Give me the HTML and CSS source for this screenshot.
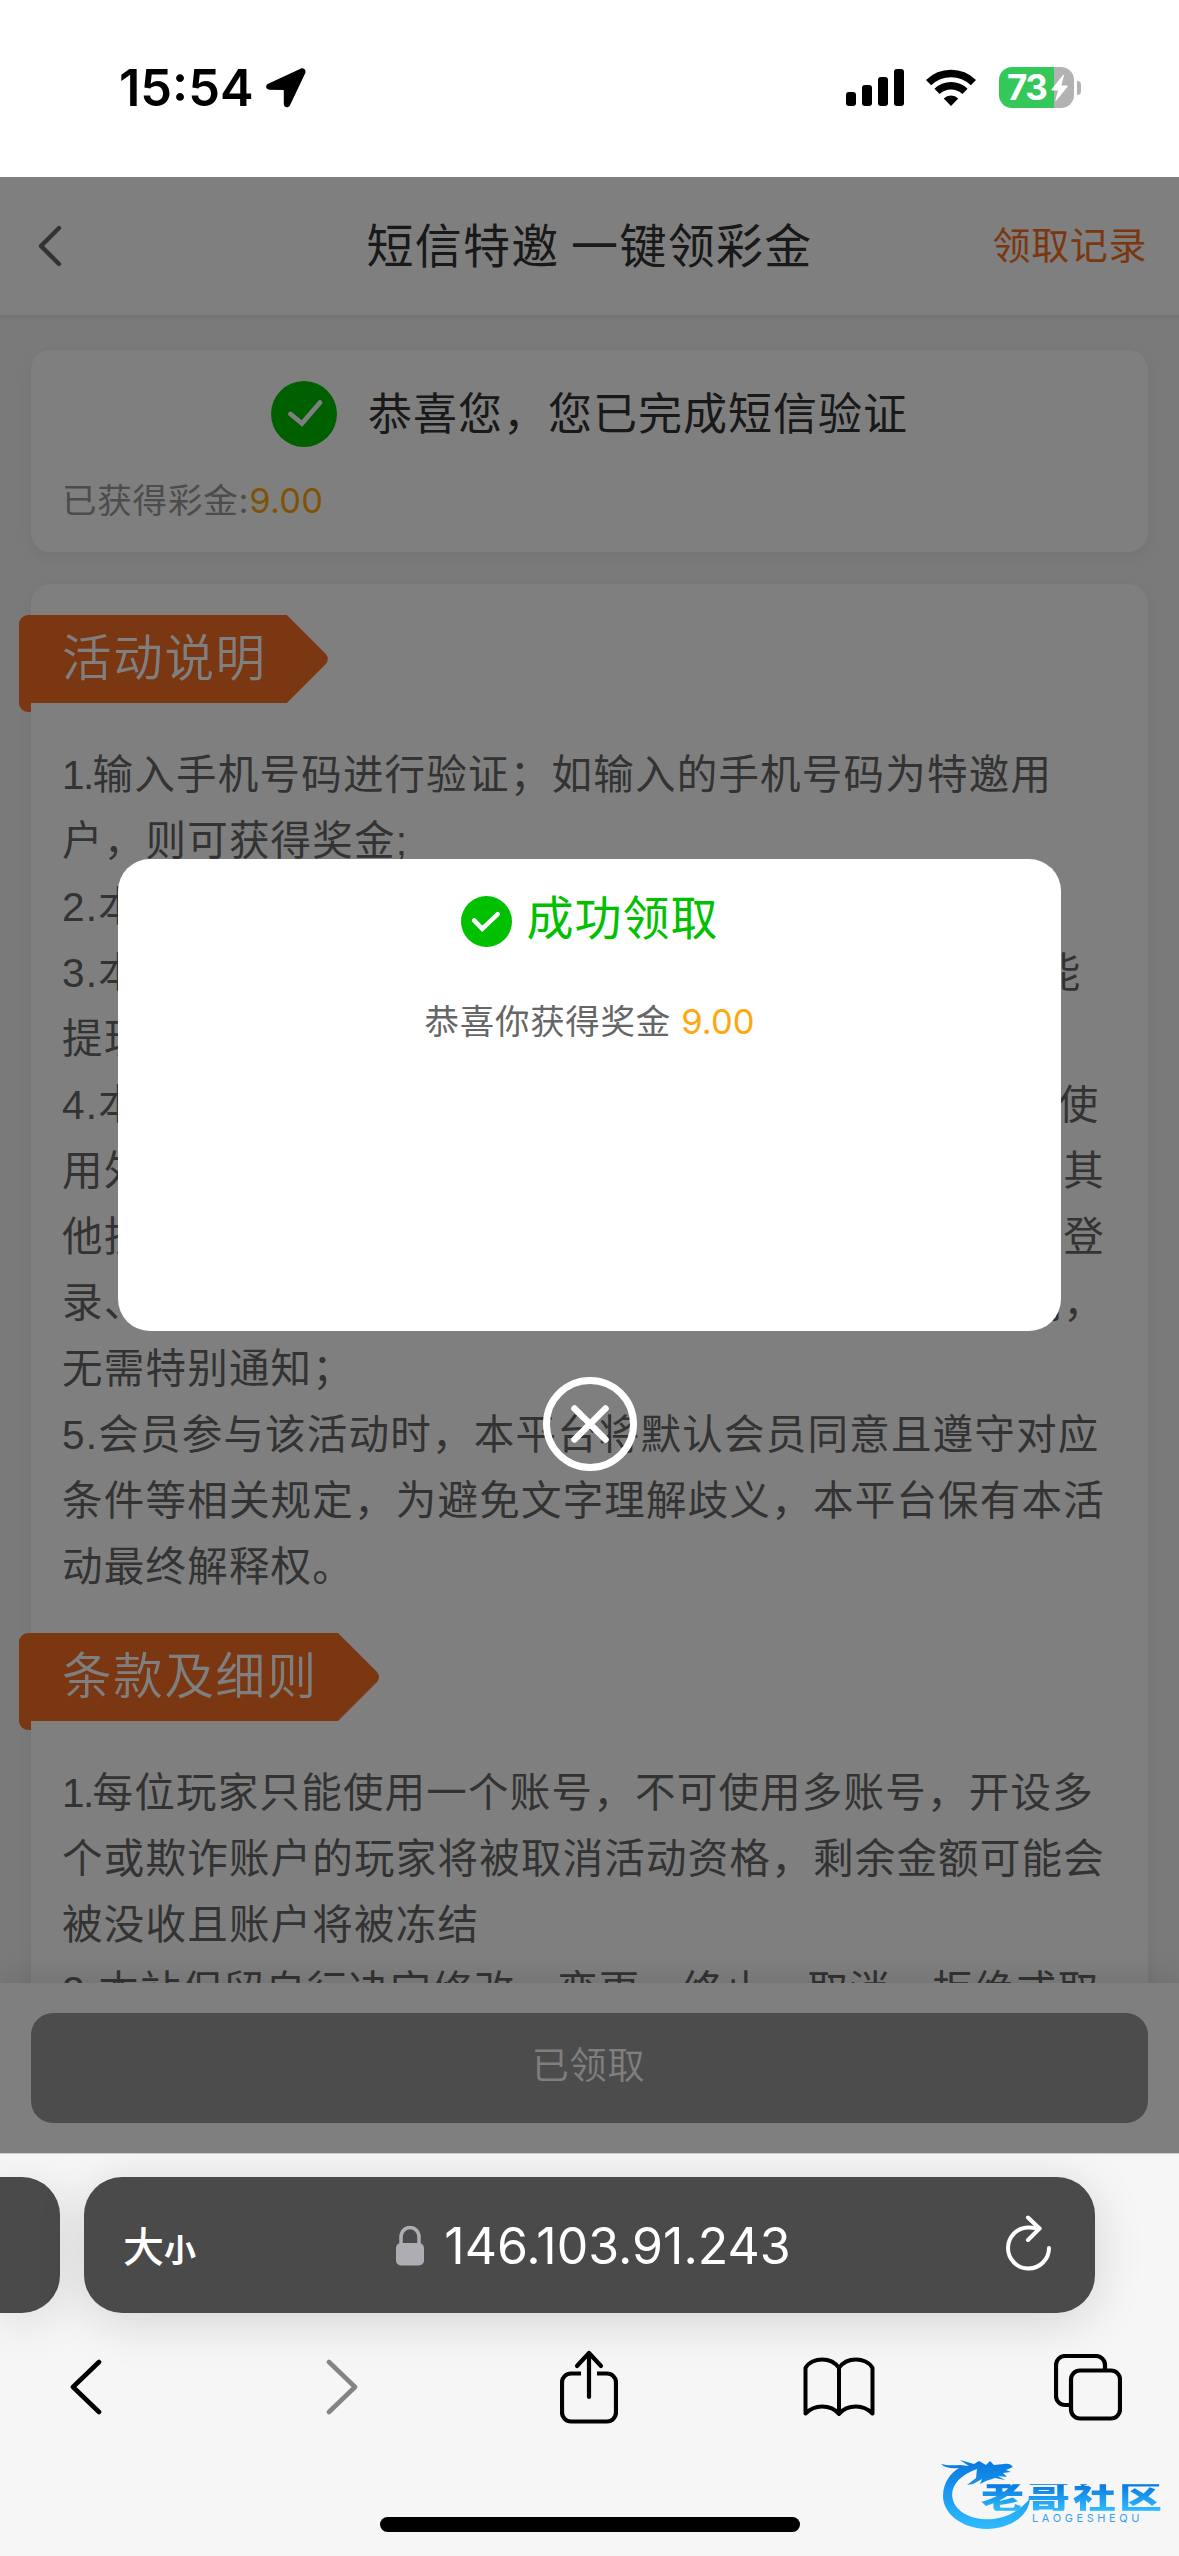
FILE: index.html
```html
<!DOCTYPE html>
<html lang="zh-CN">
<head>
<meta charset="utf-8">
<title>短信特邀 一键领彩金</title>
<link rel="stylesheet" href="styles.css">
</head>
<body>
<div class="status">
  <div class="status-time"><span class="clock">15:54</span>
    <svg width="40" height="40" viewBox="0 0 40 40"><path d="M34.500.700 2.200 15.800C-1 17.400-.3 21.600 3.200 21.700L17.800 22v13.800c0 4 4.600 4.800 6.200 1.400L39.200 5.200c1.300-2.900-1.500-5.900-4.700-4.500z"/></svg>
  </div>
  <div class="status-icons">
    <svg width="58" height="37" viewBox="0 0 58 37"><rect y="23" width="10" height="14" rx="3"/><rect x="16" y="16" width="10" height="21" rx="3"/><rect x="32" y="8" width="10" height="29" rx="3"/><rect x="48" width="10" height="37" rx="3"/></svg>
    <svg class="wifi" width="50" height="37" viewBox="0 0 50 37"><g fill="none" stroke="#000" stroke-width="7.4"><path d="M2.600 13.600a32 32 0 0 1 44.800 0"/><path d="M11 22.400a20 20 0 0 1 28 0"/></g><path d="M25 37l-7.300-7.600a10.500 10.500 0 0 1 14.600 0z"/></svg>
    <div class="battery"><span>73</span><svg width="17" height="26" viewBox="0 0 17 26"><path fill="#fff" d="M12 0 .6 14.200c-.5.7-.1 1.300.6 1.300H7L4.400 25.200c-.2.8.4 1 1 .4L16.500 11.700c.5-.7.1-1.300-.6-1.300h-5.600L13 .5c.2-.7-.5-1-1-.5z"/></svg></div>
    <i class="battery-cap"></i>
  </div>
</div>

<main class="app">
  <header class="nav">
    <svg class="nav-back" width="28" height="42" viewBox="0 0 28 42"><path d="M24 3 6 21l18 18" fill="none" stroke="#666" stroke-width="4.400" stroke-linecap="round" stroke-linejoin="round"/></svg>
    <h1>短信特邀 一键领彩金</h1>
    <a class="nav-link">领取记录</a>
  </header>

  <div class="scroll">
    <section class="card result">
      <div class="result-title">
        <svg width="66" height="66" viewBox="0 0 66 66"><circle cx="33" cy="33" r="33" fill="#00c000"/><path d="M19.500 33 31 42.500 49 21.500" fill="none" stroke="#fff" stroke-width="4.800" stroke-linecap="round"/></svg>
        <span>恭喜您，您已完成短信验证</span>
      </div>
      <p class="result-sub">已获得彩金:<b>9.00</b></p>
    </section>

    <section class="card rules">
      <h2 class="ribbon">活动说明</h2>
      <div class="copy">
        <p><span class="one">1.</span>输入手机号码进行验证；如输入的手机号码为特邀用<br>户，则可获得奖金;</p>
        <p>2.本活动仅限受邀会员参与；</p>
        <p>3.本活动所获得的彩金，仅需完成1倍有效流水投注才能<br>提现；</p>
        <p>4.本活动仅限受邀会员参与，如发现任何团体或者个人使<br>用外挂程序、机器人、恶意软件、系统漏洞、接口以及其<br>他技术手段参与活动，平台有权取消资格、冻结该账号登<br>录、收回彩金及所产生的盈利，并保留追究责任的权利，<br>无需特别通知；</p>
        <p>5.会员参与该活动时，本平台将默认会员同意且遵守对应<br>条件等相关规定，为避免文字理解歧义，本平台保有本活<br>动最终解释权。</p>
      </div>
      <h2 class="ribbon">条款及细则</h2>
      <div class="copy">
        <p><span class="one">1.</span>每位玩家只能使用一个账号，不可使用多账号，开设多<br>个或欺诈账户的玩家将被取消活动资格，剩余金额可能会<br>被没收且账户将被冻结</p>
        <p>2.本站保留自行决定修改、变更、终止、取消、拒绝或取</p>
      </div>
    </section>
  </div>

  <footer class="action"><button>已领取</button></footer>

  <div class="mask">
    <div class="dialog">
      <div class="dialog-title">
        <svg width="51" height="51" viewBox="0 0 66 66"><circle cx="33" cy="33" r="33" fill="#00c000"/><path d="M17 31.500 27.500 42.500 47.500 23.500" fill="none" stroke="#fff" stroke-width="6" stroke-linecap="round"/></svg>
        <span>成功领取</span>
      </div>
      <p>恭喜你获得奖金 <b>9.00</b></p>
    </div>
    <svg class="close" width="94" height="94" viewBox="0 0 94 94" fill="none" stroke="#fff"><circle cx="47" cy="47" r="43.500" stroke-width="7"/><path d="M31.500 31.500l31 31m0-31l-31 31" stroke-width="6.500" stroke-linecap="round"/></svg>
  </div>
</main>

<div class="browser">
  <div class="tabs">
    <div class="tab-prev"></div>
    <div class="address">
      <div class="text-size"><span>大</span><small>小</small></div>
      <div class="host">
        <svg width="28" height="40" viewBox="0 0 28 40"><rect y="17" width="28" height="22.500" rx="5" fill="#aeadb3"/><path d="M5 19v-8a9 9.500 0 0 1 18 0v8" fill="none" stroke="#aeadb3" stroke-width="3.500"/></svg>
        <span>146.103.91.243</span>
      </div>
      <svg class="reload" width="46" height="56" viewBox="0 0 46 56" fill="none" stroke="#fff" stroke-width="4" stroke-linecap="round" stroke-linejoin="round"><path d="M43 33a20.500 20.500 0 1 1-20.500-20.500c3.500 0 7 .5 11 1"/><path d="M22 2.500 33.500 13.500 22 25"/></svg>
    </div>
  </div>
  <div class="tools">
    <svg width="32" height="56" viewBox="0 0 32 56"><path d="M29 3 3 28l26 25" fill="none" stroke="#000" stroke-width="4.600" stroke-linecap="round" stroke-linejoin="round"/></svg>
    <svg width="32" height="56" viewBox="0 0 32 56"><path d="M3 3l26 25L3 53" fill="none" stroke="#848484" stroke-width="4.600" stroke-linecap="round" stroke-linejoin="round"/></svg>
    <svg width="58" height="74" viewBox="0 0 58 74" fill="none" stroke="#000" stroke-width="4.200" stroke-linecap="round" stroke-linejoin="round"><path stroke-linecap="butt" d="M21 23.500H11a9 9 0 0 0-9 9v30a9 9 0 0 0 9 9h36a9 9 0 0 0 9-9v-30a9 9 0 0 0-9-9H37"/><path d="M29 47V3M17 16 29 3l12 13"/></svg>
    <svg width="72" height="60" viewBox="0 0 72 60" fill="none" stroke="#000" stroke-width="4" stroke-linejoin="round"><path d="M36 57V11C32 5 25 2.500 19 2.500S5.500 5 2.500 11V56.500C7 52 13 49.500 19 49.500S32 52 36 57C40 52 47 49.500 53 49.500S65 52 69.500 56.500V11C66.500 5 59 2.500 53 2.500S40 5 36 11"/></svg>
    <svg width="68" height="67" viewBox="0 0 68 67" fill="none" stroke="#000" stroke-width="4.200"><rect x="17" y="16.500" width="49" height="48" rx="9"/><path d="M17 51h-6a9 9 0 0 1-9-9V11a9 9 0 0 1 9-9h31a9 9 0 0 1 9 9v5"/></svg>
  </div>
  <i class="home"></i>
  <div class="mark">
    <svg width="92" height="76" viewBox="0 0 92 76"><defs><linearGradient id="blue" x2="0" y2="1"><stop stop-color="#0878e0"/><stop offset="1" stop-color="#2fbcff"/></linearGradient></defs><path fill="url(#blue)" d="M36 13C18 19 8 32 12 44 18 66 65 74 89 42 88 62 66 73 46 73 18 72 2 56 2 40 2 26 10 17 18 12 11 13 4 12 0 8c7 2 13 1 19 1l9 1-9-6 14 4 5-3 7 4 4-4 4 4 10-1c4-1 7 0 9 3l-7 3 5 2-8 1 4 4-9-1 7 4-10-2-9 3-6 3 2-5-9 5-6 1 9-7z"/></svg>
    <div class="mark-text"><strong>老哥社区</strong><em>LAOGESHEQU</em></div>
  </div>
</div>
</body>
</html>
```
FILE: styles.css
```css
* { box-sizing: border-box; margin: 0; padding: 0; }
body {
  width: 1179px;
  height: 2556px;
  overflow: hidden;
  display: flex;
  flex-direction: column;
  background: #fff;
  font-family: Inter, "Noto Sans CJK SC", sans-serif;
  color: #333;
}
svg { display: block; flex: none; }
b { font-weight: 400; color: #ffa70f; }

/* Phone status bar */
.status {
  height: 177px;
  flex: none;
  display: flex;
  justify-content: space-between;
  padding: 0 98px 0 119px;
  color: #000;
}
.status-time { display: flex; align-items: center; gap: 12px; padding-bottom: 1px; }
.clock { font-size: 50.500px; font-weight: 600; line-height: 60px; }
.status-icons { display: flex; align-items: center; padding-bottom: 2px; }
.wifi { margin-left: 22px; }
.battery {
  display: flex;
  align-items: center;
  width: 75px;
  height: 41px;
  margin-left: 23px;
  padding-left: 8px;
  border-radius: 13px;
  background: linear-gradient(90deg, #34c759 55px, #b2b2b2 55px);
  color: #fff;
  font-size: 35px;
  font-weight: 700;
  line-height: 41px;
}
.battery span { width: 44px; letter-spacing: -1.500px; }
.battery-cap { width: 4px; height: 14px; margin-left: 3px; border-radius: 0 5px 5px 0; background: #b2b2b2; }

/* Page */
.app {
  position: relative;
  height: 1976px;
  flex: none;
  display: flex;
  flex-direction: column;
  background: #f5f5f5;
}
.nav {
  height: 141px;
  flex: none;
  display: grid;
  grid-template-columns: 260px 1fr 260px;
  align-items: center;
  padding: 0 32px 0 32px;
  background: #fff;
  border-bottom: 3px solid #e8e8e8;
}
.nav-back { margin-left: 3px; }
.nav h1 { padding-bottom: 7px; font-size: 47px; font-weight: 400; letter-spacing: 1.300px; text-align: center; white-space: nowrap; word-spacing: -3px; }
.nav-link { padding-bottom: 8px; font-size: 38px; letter-spacing: .6px; color: #f46e22; text-align: right; }
.scroll { flex: 1; min-height: 0; overflow: hidden; padding: 32px 31px 0; }
.card { background: #fff; border-radius: 20px; box-shadow: 0 5px 18px rgba(0, 0, 0, .06); }
.result { height: 202px; padding: 31px 32px 0 31px; margin-bottom: 32px; }
.result-title { display: flex; align-items: center; justify-content: center; gap: 31px; padding-left: 1px; font-size: 44px; letter-spacing: 1px; line-height: 66px; }
.result-sub { margin-top: 29px; font-size: 34.500px; letter-spacing: .8px; line-height: 50px; color: #999; }
.result-sub b { letter-spacing: .2px; }
.rules { padding: 31px 31px 0; height: 1600px; }
.ribbon {
  position: relative;
  width: max-content;
  height: 88px;
  margin-left: -43px;
  padding: 0 20px 0 43px;
  border-radius: 9px 0 0 0;
  background: #f46e22;
  color: #fff;
  font-size: 49.500px;
  font-weight: 350;
  letter-spacing: 1.700px;
  line-height: 86px;
}
.ribbon::before {
  content: "";
  position: absolute;
  left: 0;
  top: 87px;
  width: 12px;
  height: 10px;
  border-radius: 0 0 0 9px;
  background: #f46e22;
}
.ribbon::after {
  content: "";
  position: absolute;
  left: calc(100% - 1px);
  top: 0;
  width: 44px;
  height: 88px;
  background: #f46e22;
  clip-path: path("M0 0H1L40 39Q44 44 40 49L1 88H0Z");
}
.copy {
  position: relative;
  top: 1px;
  margin: 38px 0 34px;
  font-family: "Liberation Sans", "Noto Sans CJK SC", sans-serif;
  font-size: 40.500px;
  letter-spacing: 1.220px;
  line-height: 66px;
  color: #666;
  white-space: nowrap;
}
.one { letter-spacing: -1.600px; }
.action { position: relative; height: 170px; flex: none; padding: 30px 31px; background: #fff; box-shadow: 0 -4px 30px rgba(0, 0, 0, .12); }
.action button {
  display: block;
  width: 100%;
  height: 110px;
  padding: 0 2px 4px 0;
  border: 0;
  border-radius: 22px;
  background: #999;
  color: #fff;
  font: 350 37px/102px Inter, "Noto Sans CJK SC", sans-serif;
  letter-spacing: .8px;
}

/* Success dialog */
.mask {
  position: absolute;
  inset: 0;
  display: flex;
  flex-direction: column;
  align-items: center;
  padding-top: 682px;
  background: rgba(0, 0, 0, .5);
}
.dialog { width: 943px; height: 472px; border-radius: 32px; background: #fff; text-align: center; }
.dialog-title { display: flex; justify-content: center; align-items: center; gap: 15px; height: 66px; margin-top: 29px; font-size: 47px; letter-spacing: 1px; line-height: 66px; color: #00c000; }
.dialog-title span { padding-bottom: 6px; }
.dialog p { margin-top: 43px; font-size: 34.500px; letter-spacing: .7px; line-height: 50px; color: #666; }
.dialog b { letter-spacing: 0; }
.close { margin-top: 46px; }

/* Browser controls */
.browser { position: relative; flex: 1; border-top: 1px solid #ccc; background: #f6f6f6; overflow: hidden; }
.tabs { display: flex; gap: 24px; padding-top: 23px; }
.tab-prev { width: 60px; height: 136px; border-radius: 0 38px 38px 0; background: #4a4a4a; box-shadow: 0 8px 50px rgba(0, 0, 0, .12); }
.address {
  display: grid;
  grid-template-columns: 120px 1fr 120px;
  align-items: center;
  width: 1011px;
  height: 136px;
  padding: 0 43px 0 39px;
  border-radius: 38px;
  background: #4a4a4a;
  box-shadow: 0 8px 50px rgba(0, 0, 0, .14);
  color: #fff;
}
.text-size { display: flex; align-items: baseline; font-weight: 500; font-size: 41px; padding-bottom: 3px; }
.text-size small { font-size: 32px; font-weight: 700; }
.host { display: flex; align-items: center; justify-content: center; gap: 20px; padding: 2px 0 0 12px; font-size: 50px; line-height: 60px; }
.reload { justify-self: end; margin-bottom: 5px; }
.tools {
  display: grid;
  grid-template-columns: 256px 234px 243px 251px 68px;
  align-items: center;
  height: 74px;
  margin: 37px 0 0 70px;
}
.home { position: absolute; left: 380px; bottom: 24px; width: 420px; height: 15px; border-radius: 8px; background: #000; }
.mark { position: absolute; left: 941px; top: 302px; display: flex; }
.mark-text { margin: 24px 0 0 -52px; }
.mark-text strong {
  display: block;
  width: 188px;
  font-size: 43px;
  font-weight: 900;
  letter-spacing: 3px;
  line-height: 35px;
  transform: scaleY(.76);
  background: linear-gradient(#0878e0, #2fbcff);
  -webkit-background-clip: text;
  background-clip: text;
  color: transparent;
}
.mark-text em { display: block; margin: -3px 0 0 51px; font-style: normal; font-size: 11px; letter-spacing: 3.600px; line-height: 12px; color: #3aa0ec; }
```
